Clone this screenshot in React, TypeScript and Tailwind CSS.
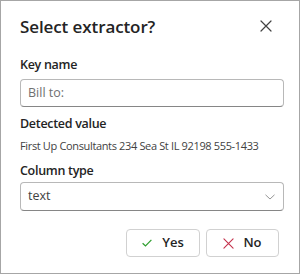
function CloseGlyph({ size, className }: { size: number; className?: string }) {
  return (
    <svg width={size} height={size} viewBox="0 0 12 12" className={className} fill="none">
      <path d="M1 1 11 11M11 1 1 11" stroke="currentColor" strokeWidth="1.2" strokeLinecap="round" />
    </svg>
  );
}

export default function App() {
  return (
    <div
      className="w-[300px] h-[274px] bg-white border border-[#a6a6a6] text-[#242424] px-[19px] pt-[16px]"
      style={{ fontFamily: '"Open Sans", "Noto Sans", sans-serif' }}
    >
      {/* Header */}
      <div className="flex items-center justify-between h-[20px]">
        <h1 className="text-[17px] font-semibold leading-[20px] tracking-[-0.1px]">
          Select extractor?
        </h1>
        <span className="mr-[8px] -mt-[2px] text-[#424242]">
          <CloseGlyph size={12} />
        </span>
      </div>

      {/* Key name */}
      <label className="block mt-[20px] text-[12.5px] font-semibold leading-[16px] tracking-[-0.3px]">
        Key name
      </label>
      <div className="mt-[6px] h-[28px] w-[264px] rounded-[4px] border border-[#b8b8b8] border-b-[#868686] flex items-center px-[7px]">
        <span className="text-[12.5px] text-[#707070]">Bill to:</span>
      </div>

      {/* Detected value */}
      <p className="mt-[9px] text-[12.5px] font-semibold leading-[16px] tracking-[-0.3px]">
        Detected value
      </p>
      <p className="mt-[7px] text-[11px] leading-[14px] text-[#424242] tracking-[-0.35px]">
        First Up Consultants 234 Sea St IL 92198 555-1433
      </p>

      {/* Column type */}
      <p className="mt-[10px] text-[12.5px] font-semibold leading-[16px] tracking-[-0.3px]">
        Column type
      </p>
      <div className="mt-[3px] h-[29px] w-[264px] rounded-[4px] border border-[#b8b8b8] border-b-[#868686] flex items-center justify-between pl-[7px] pr-[8px]">
        <span className="text-[12.5px] text-[#424242]">text</span>
        <svg width="10" height="6" viewBox="0 0 10 6" fill="none" className="text-[#8a8a8a]">
          <path d="M0.5 0.8 5 5 9.5 0.8" stroke="currentColor" strokeWidth="0.9" />
        </svg>
      </div>

      {/* Actions */}
      <div className="mt-[18px] flex justify-end gap-[6px] pr-[1px]">
        <button className="w-[74px] h-[28px] rounded-[4px] border border-[#d1d1d1] flex items-center justify-center gap-[10px] text-[13px] font-semibold">
          <svg width="10" height="8" viewBox="0 0 10 8" fill="none" className="text-[#2e9e2e]">
            <path d="M0.6 4.2 3.5 7 9.4 0.8" stroke="currentColor" strokeWidth="1.2" />
          </svg>
          <span>Yes</span>
        </button>
        <button className="w-[73px] h-[28px] rounded-[4px] border border-[#d1d1d1] flex items-center justify-center gap-[9px] text-[13px] font-semibold">
          <span className="text-[#c4314b]">
            <CloseGlyph size={11} />
          </span>
          <span>No</span>
        </button>
      </div>
    </div>
  );
}
